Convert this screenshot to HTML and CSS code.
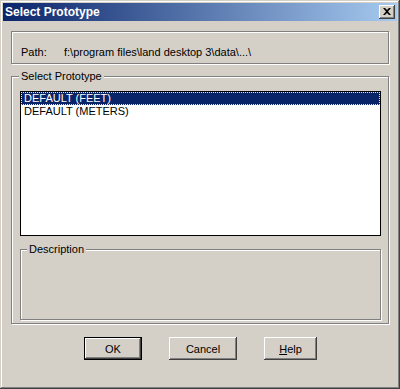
FILE: index.html
```html
<!DOCTYPE html>
<html>
<head>
<meta charset="utf-8">
<title>Select Prototype</title>
<link rel="stylesheet" href="styles.css">
</head>
<body>
<div class="window">
  <div class="titlebar">
    <span class="title">Select Prototype</span>
    <div class="close">
      <svg width="8" height="7" viewBox="0 0 8 7"><path d="M0 0h2l2 2 2-2h2L5 3.5 8 7H6L4 5 2 7H0l3-3.5z" fill="#000"/></svg>
    </div>
  </div>
  <div class="content">
    <div class="pathbox">
      <span class="pathlabel">Path:</span>
      <span class="pathvalue">f:\program files\land desktop 3\data\...\</span>
    </div>
    <div class="group main">
      <span class="legend">Select Prototype</span>
      <div class="listbox">
        <div class="item selected">DEFAULT (FEET)</div>
        <div class="item">DEFAULT (METERS)</div>
      </div>
      <div class="group desc">
        <span class="legend">Description</span>
      </div>
    </div>
    <div class="buttons">
      <div class="btn default ok">OK</div>
      <div class="btn cancel">Cancel</div>
      <div class="btn help"><u>H</u>elp</div>
    </div>
  </div>
</div>
</body>
</html>
```

FILE: styles.css
```css
html, body {
  margin: 0;
  padding: 0;
  background: #d4d0c8;
  font-family: "Liberation Sans", Arial, sans-serif;
  font-size: 11px;
  color: #000;
}

.window {
  width: 400px;
  height: 389px;
  box-sizing: border-box;
  padding: 3px;
  background: #d4d0c8;
  box-shadow: inset -1px -1px #404040, inset 1px 1px #d4d0c8, inset -2px -2px #808080, inset 2px 2px #ffffff;
  display: flex;
  flex-direction: column;
}

.titlebar {
  height: 18px;
  flex: none;
  display: flex;
  align-items: center;
  justify-content: space-between;
  padding: 0 2px;
  background: linear-gradient(to right, #0a246a, #a6caf0);
  color: #fff;
}

.title {
  font-weight: bold;
  font-size: 12px;
  line-height: 14px;
}

.close {
  width: 16px;
  height: 14px;
  box-sizing: border-box;
  background: #d4d0c8;
  box-shadow: inset -1px -1px #404040, inset 1px 1px #ffffff, inset -2px -2px #808080;
  display: flex;
  align-items: center;
  justify-content: center;
  padding-bottom: 1px;
}

.content {
  padding: 10px 8px 0 8px;
  display: flex;
  flex-direction: column;
}

.pathbox {
  height: 33px;
  box-sizing: border-box;
  border: 1px solid #808080;
  box-shadow: inset 1px 1px #ffffff, 1px 1px #ffffff;
  display: flex;
  align-items: flex-end;
  padding: 0 0 4px 9px;
  line-height: 13px;
}

.pathlabel {
  width: 43px;
}

.group {
  position: relative;
  box-sizing: border-box;
  border: 1px solid #808080;
  box-shadow: inset 1px 1px #ffffff, 1px 1px #ffffff;
}

.legend {
  position: absolute;
  top: -7px;
  padding: 0 2px;
  line-height: 13px;
  background: #d4d0c8;
}

.main {
  margin-top: 12px;
  height: 248px;
  padding: 14px 7px 3px 8px;
  display: flex;
  flex-direction: column;
}

.main > .legend {
  left: 7px;
}

.listbox {
  height: 145px;
  box-sizing: border-box;
  border: 1px solid #000;
  background: #fff;
}

.item {
  height: 13px;
  line-height: 13px;
  padding-left: 3px;
  white-space: nowrap;
}

.item.selected {
  background: #0a246a;
  color: #fff;
  outline: 1px dotted #f5f0a0;
  outline-offset: -1px;
}

.desc {
  margin-top: 13px;
  height: 71px;
}

.desc > .legend {
  left: 6px;
}

.buttons {
  margin-top: 13px;
  padding-left: 73px;
  display: flex;
  gap: 27px;
}

.btn {
  height: 23px;
  box-sizing: border-box;
  display: flex;
  align-items: center;
  justify-content: center;
  background: #d4d0c8;
  box-shadow: inset -1px -1px #404040, inset 1px 1px #ffffff, inset -2px -2px #808080;
}

.btn.default {
  border: 1px solid #000;
}

.ok { width: 58px; }
.cancel { width: 68px; }
.help { width: 53px; }
```
